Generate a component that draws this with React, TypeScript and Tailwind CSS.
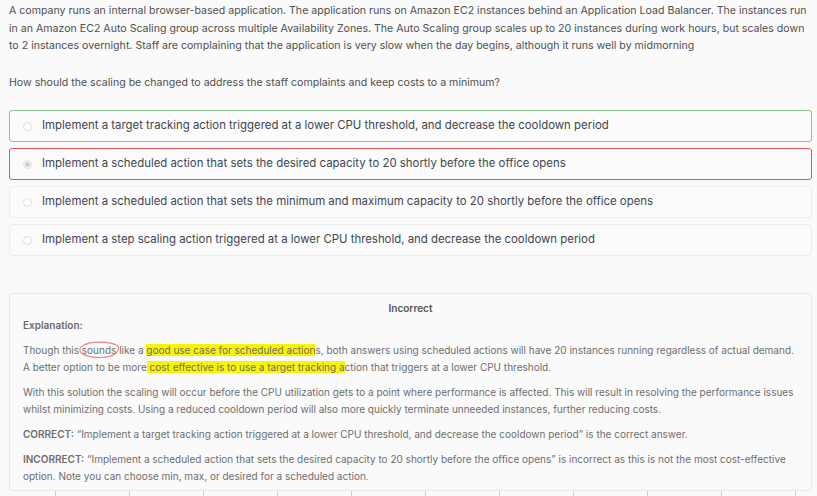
const options = [
  { text: "Implement a target tracking action triggered at a lower CPU threshold, and decrease the cooldown period", state: "correct" },
  { text: "Implement a scheduled action that sets the desired capacity to 20 shortly before the office opens", state: "wrong" },
  { text: "Implement a scheduled action that sets the minimum and maximum capacity to 20 shortly before the office opens", state: "none" },
  { text: "Implement a step scaling action triggered at a lower CPU threshold, and decrease the cooldown period", state: "none" },
]

function Radio({ checked }: { checked: boolean }) {
  return (
    <span className="flex h-[9px] w-[9px] shrink-0 items-center justify-center rounded-full border border-[#dcdcdc] bg-white">
      {checked && <span className="h-[5px] w-[5px] rounded-full bg-[#cfcfcf]" />}
    </span>
  )
}

export default function App() {
  return (
    <div className="h-[496px] overflow-hidden bg-[#fafafa] pl-[9px] pr-[5px] pt-[2px] font-['Inter',sans-serif]">
      <p className="text-[10.6px] leading-[17.5px] text-[#4f4f4f]">
        A company runs an internal browser-based application. The application runs on Amazon EC2 instances behind an Application Load Balancer. The instances run in an Amazon EC2 Auto Scaling group across multiple Availability Zones. The Auto Scaling group scales up to 20 instances during work hours, but scales down to 2 instances overnight. Staff are complaining that the application is very slow when the day begins, although it runs well by midmorning
      </p>
      <p className="mt-[19px] text-[10.6px] leading-[17.5px] text-[#4f4f4f]">
        How should the scaling be changed to address the staff complaints and keep costs to a minimum?
      </p>

      <div className="mt-[19px] flex flex-col gap-[6px]">
        {options.map((o, i) => (
          <div
            key={i}
            className={
              "flex h-[32px] items-center gap-[10px] rounded-[3px] border bg-[#fbfbfb] pl-[13px] " +
              (o.state === "correct"
                ? "border-[#8cc78c]"
                : o.state === "wrong"
                ? "border-[#e0575d]"
                : "border-[#ececec]")
            }
          >
            <Radio checked={o.state === "wrong"} />
            <span className="text-[11.4px] text-[#3f4650]">{o.text}</span>
          </div>
        ))}
      </div>

      <div className="mt-[37px] rounded-[3px] border border-[#e9e9e9] bg-[#fafafa] px-[13px] pb-[5px] pt-[6px] text-[10px] leading-[17px] text-[#6e6e6e]">
        <p className="text-center font-semibold text-[#555]">Incorrect</p>
        <p className="font-semibold text-[#6a6a6a]">Explanation:</p>
        <p className="mt-[8px]">
          Though this{" "}
          <span className="relative">
            sounds
            <svg className="absolute -left-[5px] -top-[4px] h-[21px] w-[44px]" viewBox="0 0 44 20" fill="none">
              <path d="M6 5 C14 0 34 1 40 5 C45 9 38 17 24 17 C10 17 1 13 3 8 C4 5 8 4 12 3" stroke="#e98585" strokeWidth="1.1" />
            </svg>
          </span>{" "}
          like a <mark className="bg-[#f7f500] text-[#6e6e6e]">good use case for scheduled action</mark>s, both answers using scheduled actions will have 20 instances running regardless of actual demand. A better option to be more<mark className="bg-[#f7f500] text-[#6e6e6e]"> cost effective is to use a target tracking a</mark>ction that triggers at a lower CPU threshold.
        </p>
        <p className="mt-[8px]">
          With this solution the scaling will occur before the CPU utilization gets to a point where performance is affected. This will result in resolving the performance issues whilst minimizing costs. Using a reduced cooldown period will also more quickly terminate unneeded instances, further reducing costs.
        </p>
        <p className="mt-[8px]">
          <span className="font-semibold">CORRECT:</span> “Implement a target tracking action triggered at a lower CPU threshold, and decrease the cooldown period” is the correct answer.
        </p>
        <p className="mt-[8px]">
          <span className="font-semibold">INCORRECT:</span> “Implement a scheduled action that sets the desired capacity to 20 shortly before the office opens” is incorrect as this is not the most cost-effective option. Note you can choose min, max, or desired for a scheduled action.
        </p>
      </div>

      <div className="flex h-[8px] pl-[46px]">
        {Array.from({ length: 11 }).map((_, i) => (
          <div key={i} className="w-[74px] shrink-0 border-l border-[#cfcfcf]" />
        ))}
      </div>
    </div>
  )
}
